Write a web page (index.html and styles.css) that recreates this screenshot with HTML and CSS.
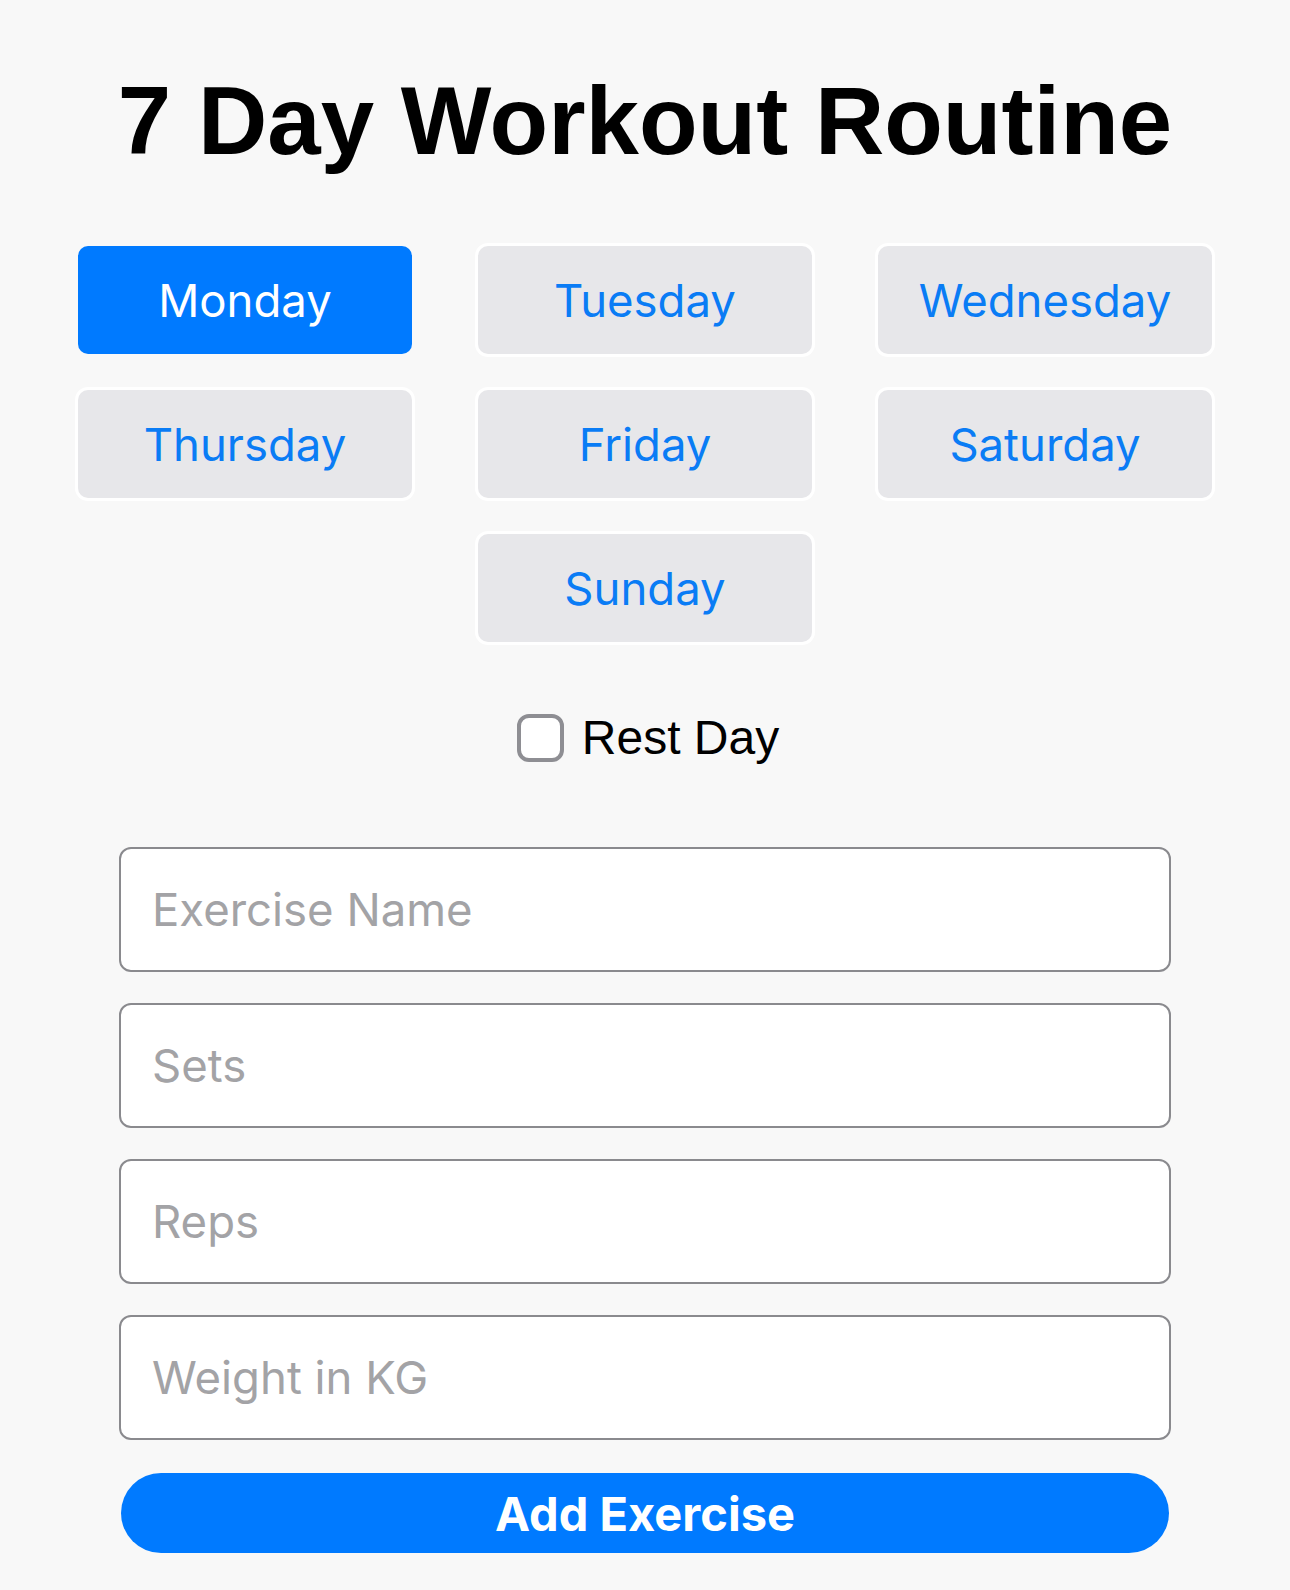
FILE: index.html
```html
<!DOCTYPE html>
<html lang="en">
<head>
<meta charset="utf-8">
<title>7 Day Workout Routine</title>
<link rel="stylesheet" href="styles.css">
</head>
<body>
<main class="app">
  <h1 class="title">7 Day Workout Routine</h1>
  <div class="days">
    <button class="day day-active">Monday</button>
    <button class="day">Tuesday</button>
    <button class="day">Wednesday</button>
    <button class="day">Thursday</button>
    <button class="day">Friday</button>
    <button class="day">Saturday</button>
    <button class="day day-center">Sunday</button>
  </div>
  <label class="rest">
    <span class="checkbox"></span>
    <span class="rest-text">Rest Day</span>
  </label>
  <form class="fields">
    <input class="field" type="text" placeholder="Exercise Name">
    <input class="field" type="text" placeholder="Sets">
    <input class="field" type="text" placeholder="Reps">
    <input class="field" type="text" placeholder="Weight in KG">
    <button class="add" type="button">Add Exercise</button>
  </form>
</main>
</body>
</html>
```
FILE: styles.css
```css
* { box-sizing: border-box; }
html, body { margin: 0; padding: 0; }
body {
  background: #f8f8f8;
  width: 1290px;
  height: 1590px;
  overflow: hidden;
  font-family: Inter, "Liberation Sans", sans-serif;
}
.app {
  display: flex;
  flex-direction: column;
  align-items: center;
  padding-top: 66px;
}
.title {
  margin: 0;
  font-family: "Liberation Sans", Arial, sans-serif;
  font-weight: 700;
  font-size: 96px;
  line-height: 110px;
  color: #000;
  text-align: center;
}
.days {
  margin-top: 70px;
  display: grid;
  grid-template-columns: repeat(3, 334px);
  column-gap: 66px;
  row-gap: 36px;
}
.day {
  height: 108px;
  border: none;
  border-radius: 10px;
  background: #e7e7ea;
  color: #0a7cf5;
  font-family: Inter, "Liberation Sans", sans-serif;
  font-size: 45.5px;
  font-weight: 400;
  box-shadow: 0 0 0 3px #ffffff;
  padding: 0;
}
.day-active {
  background: #007aff;
  color: #ffffff;
  box-shadow: none;
}
.day-center { grid-column: 2; }
.rest {
  margin-top: 70px;
  margin-left: 6px;
  display: flex;
  align-items: center;
  gap: 18px;
}
.checkbox {
  width: 47px;
  height: 48px;
  border: 4px solid #8e8e93;
  border-radius: 12px;
  background: #fff;
}
.rest-text {
  font-family: "Liberation Sans", Arial, sans-serif;
  font-size: 48px;
  line-height: 52px;
  color: #000;
}
.fields {
  margin: 83px 0 0;
  width: 1052px;
  display: flex;
  flex-direction: column;
  align-items: center;
  gap: 31px;
}
.field {
  width: 100%;
  height: 125px;
  border: 2.5px solid #8a8a8e;
  border-radius: 12px;
  background: #fff;
  padding: 0 31px;
  font-family: Inter, "Liberation Sans", sans-serif;
  font-size: 45.5px;
  color: #000;
}
.field::placeholder { color: #a3a3a6; }
.add {
  margin-top: 2px;
  width: 1048px;
  height: 80px;
  border: none;
  border-radius: 40px;
  background: #007aff;
  color: #fff;
  font-family: Inter, "Liberation Sans", sans-serif;
  font-weight: 700;
  font-size: 47px;
}
```
